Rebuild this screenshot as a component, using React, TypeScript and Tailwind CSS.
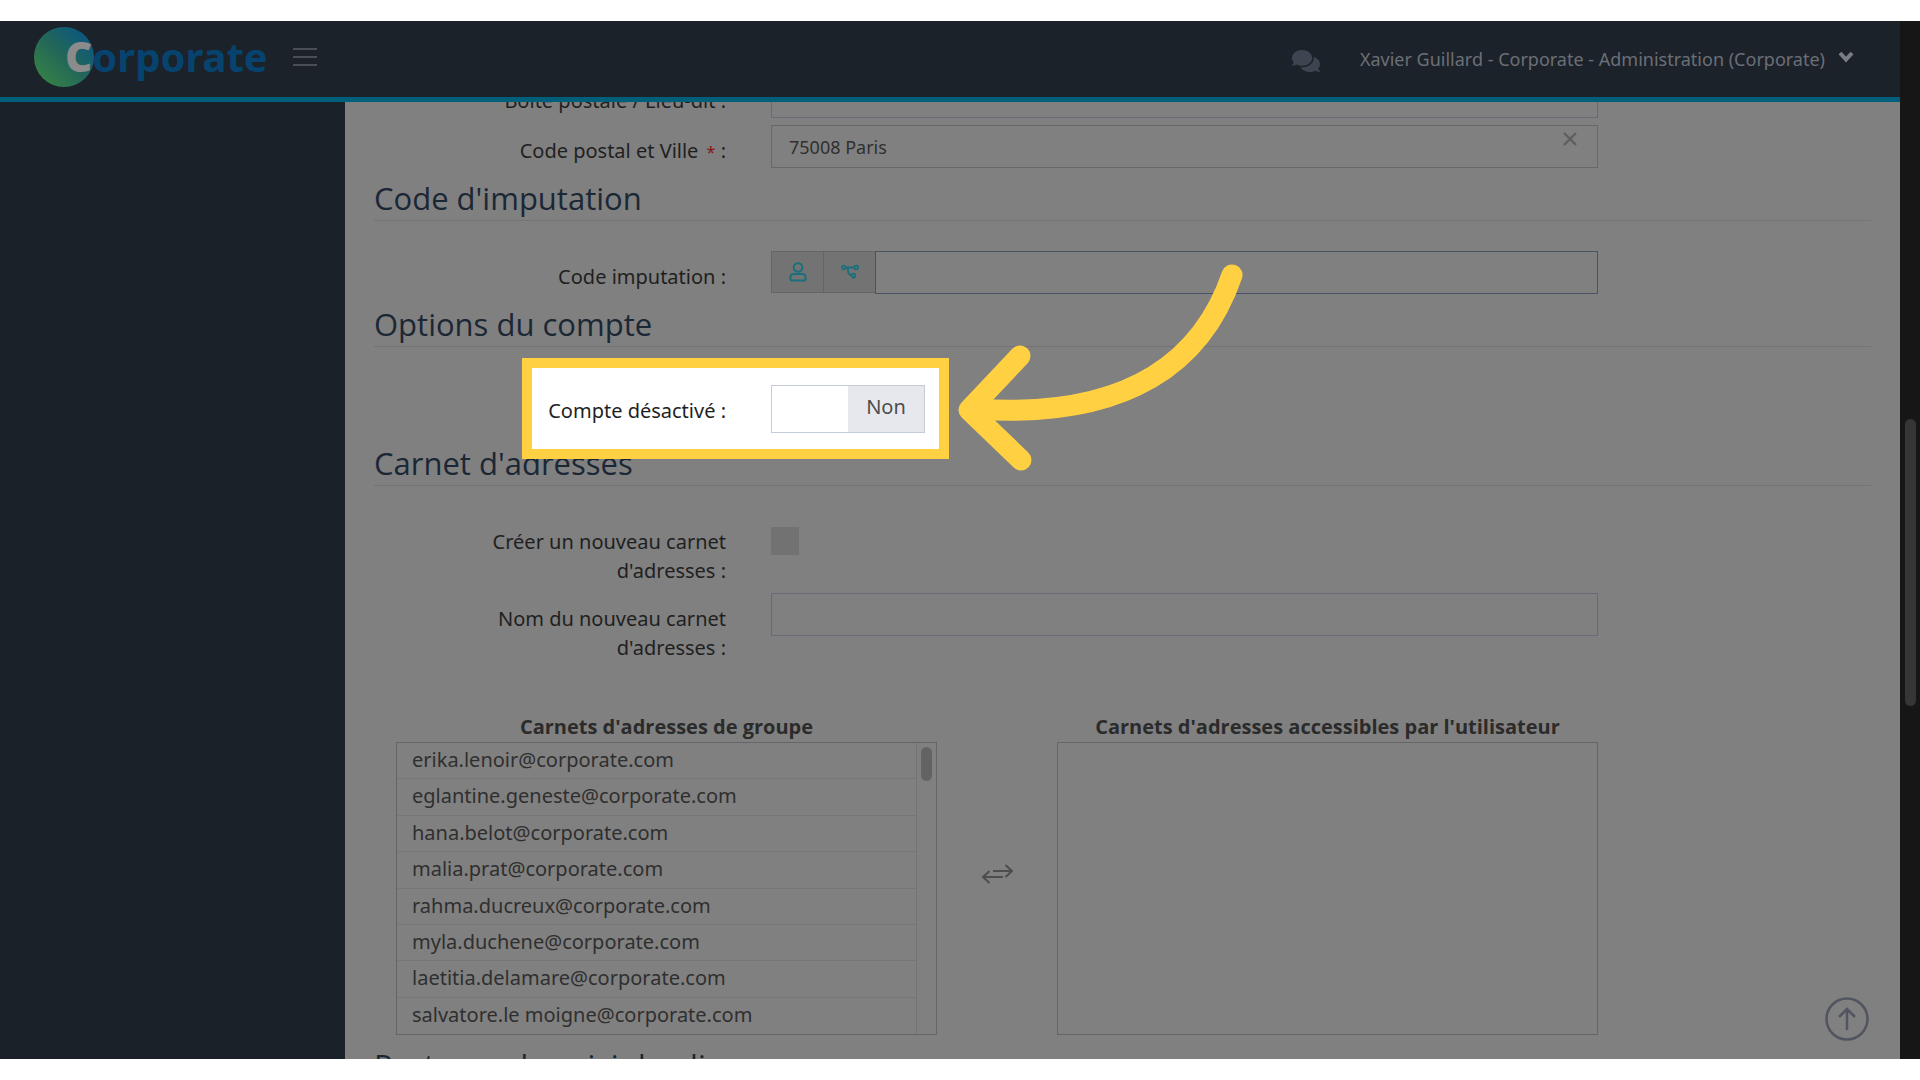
import type { ReactNode } from 'react';
import { FaComments } from 'react-icons/fa';

const GROUP_BOOKS = [
  'erika.lenoir@corporate.com',
  'eglantine.geneste@corporate.com',
  'hana.belot@corporate.com',
  'malia.prat@corporate.com',
  'rahma.ducreux@corporate.com',
  'myla.duchene@corporate.com',
  'laetitia.delamare@corporate.com',
  'salvatore.le moigne@corporate.com',
];

const inputClass =
  'block h-[43px] w-full min-w-0 border bg-transparent px-[17px] text-[18px] text-[#303030] outline-none';

function Logo() {
  return (
    <a href="#" className="relative flex h-[60px] items-center pl-[31px]" aria-label="Corporate">
      <span className="absolute left-0 top-0 size-[60px] rounded-full bg-linear-to-tr from-[#3b8a3c] via-[#236658] to-[#07508a]" />
      <span className="relative flex items-baseline leading-[58px]">
        <span className="text-[42px] font-black text-[#8b8b8b]">C</span>
        <span className="text-[40px] font-bold text-[#07436f]">orporate</span>
      </span>
    </a>
  );
}

function Header() {
  return (
    <header className="flex h-[81px] shrink-0 items-center border-b-5 border-[#00607c] bg-[#1c222a] pb-[5px] pl-[34px] pr-[46px]">
      <Logo />
      <button className="ml-[25px] flex w-6 flex-col gap-[6px]" aria-label="Menu">
        <span className="h-[2px] w-full bg-[#484d56]" />
        <span className="h-[2px] w-full bg-[#484d56]" />
        <span className="h-[2px] w-full bg-[#484d56]" />
      </button>

      <div className="ml-auto flex items-center pt-[5px]">
        <button className="mr-10 pt-1 text-[#3e4550]" aria-label="Messages">
          <FaComments size={28} />
        </button>
        <button className="flex items-center gap-[13px] text-[18px] leading-6 text-[#6b6f76]">
          Xavier Guillard - Corporate - Administration (Corporate)
          <svg width="16" height="12" viewBox="0 0 16 12" fill="none" stroke="#7a7d83" strokeWidth="4" className="mb-1">
            <path d="m2 2 6 6.500L14 2" />
          </svg>
        </button>
      </div>
    </header>
  );
}

function SectionTitle({ children }: { children: ReactNode }) {
  return (
    <h2 className="border-b border-[#747474] pt-2 font-['Open_Sans',sans-serif] text-[31px] leading-[44px] text-[#1b2735]">
      {children}
    </h2>
  );
}

interface FieldProps {
  label: ReactNode;
  id: string;
  className?: string;
  children: ReactNode;
}

function Field({ label, id, className = '', children }: FieldProps) {
  return (
    <div className={`mr-[273px] grid grid-cols-[352px_1fr] gap-x-[45px] ${className}`}>
      <label htmlFor={id} className="relative z-20 -mb-3 pl-[90px] pt-[11px] text-right text-[20px] leading-[29px] text-[#1f1f1f]">
        {label}
      </label>
      {children}
    </div>
  );
}

function UserIcon() {
  return (
    <svg width="18" height="20" viewBox="0 0 18 20" fill="none" stroke="currentColor" strokeWidth="2">
      <circle cx="9" cy="5.5" r="4.3" />
      <path d="M4.500 12h9c2 0 3.200 2 3.200 4.500 0 1.200-.7 2-2 2H3.300c-1.300 0-2-.8-2-2C1.300 14 2.500 12 4.500 12Z" />
    </svg>
  );
}

function BranchIcon() {
  return (
    <svg width="18" height="16" viewBox="0 0 18 16" fill="none" stroke="currentColor" strokeWidth="1.800">
      <circle cx="2.800" cy="3.500" r="1.900" />
      <circle cx="15.200" cy="3.500" r="1.900" />
      <circle cx="12.500" cy="11.500" r="1.900" />
      <path d="M4.700 3.500h8.600M7 3.500v3.200c0 2.600 1.500 4 3.600 4.500M12.500 13.400v1.600" />
    </svg>
  );
}

// Yellow frame and arrow that point at the current step
function Spotlight() {
  return (
    <div className="absolute -bottom-4 -top-[17px] left-[158px] z-10 w-[407px] bg-white ring-[10px] ring-[#ffd142]">
      <svg
        className="pointer-events-none absolute -top-[108px] left-full"
        width="320"
        height="220"
        viewBox="0 0 320 220"
        fill="none"
        stroke="#ffd142"
        strokeWidth="21"
        strokeLinecap="round"
        strokeLinejoin="round"
      >
        <path d="M293 15C264 100 191 160 36 149" />
        <path d="M81 96 30 150l52 50" />
      </svg>
    </div>
  );
}

function Scroller({ title, children }: { title: string; children?: ReactNode }) {
  return (
    <div>
      <h3 className="text-center font-['Open_Sans',sans-serif] text-[20px] font-bold leading-[30px] text-[#2b2b2b]">
        {title}
      </h3>
      <div className="flex h-[293px] border border-[#656565]">{children}</div>
    </div>
  );
}

function AccountForm() {
  return (
    <form className="min-w-0 flex-1 overflow-hidden bg-[#808080] px-[29px]">
      <Field label="Boîte postale / Lieu-dit :" id="bp" className="-mt-[27px]">
        <input id="bp" className={`${inputClass} border-[#676b75]`} />
      </Field>

      <Field
        label={<>Code postal et Ville <span className="ml-[3px] text-[16px] text-[#8a1414]">*</span> :</>}
        id="city"
        className="mt-[7px]"
      >
        <div className="relative">
          <input id="city" defaultValue="75008 Paris" className={`${inputClass} border-[#686868]`} />
          <button type="button" className="absolute right-[21px] top-[7px] text-[#5e5e5e]" aria-label="Effacer">
            <svg width="14" height="14" viewBox="0 0 14 14" stroke="currentColor" strokeWidth="2.400">
              <path d="m1 1 12 12M13 1 1 13" />
            </svg>
          </button>
        </div>
      </Field>

      <SectionTitle>Code d'imputation</SectionTitle>
      <Field label="Code imputation :" id="code" className="mt-[30px]">
        <div className="flex">
          <div className="flex h-[42px] shrink-0 divide-x divide-[#656565] border border-r-0 border-[#656565] bg-[#737373] text-[#19707c]">
            <button type="button" className="flex w-[52px] items-center justify-center" aria-label="Utilisateur">
              <UserIcon />
            </button>
            <button type="button" className="flex w-[51px] items-center justify-center" aria-label="Groupe">
              <BranchIcon />
            </button>
          </div>
          <input id="code" className={`${inputClass} border-[#4a5268]`} />
        </div>
      </Field>

      <SectionTitle>Options du compte</SectionTitle>
      <div className="relative mt-[38px]">
        <Spotlight />
        <Field label="Compte désactivé :" id="disabled">
          <label className="relative z-20 flex h-[48px] w-[154px] border border-[#c3cbdc] bg-white">
            <input id="disabled" type="checkbox" className="peer sr-only" />
            <span className="ml-auto flex w-[76px] items-center justify-center bg-[#e7e8ee] pb-1 text-[20px] text-[#4d4d4d]">
              Non
            </span>
          </label>
        </Field>
      </div>

      <SectionTitle>Carnet d'adresses</SectionTitle>
      <Field label="Créer un nouveau carnet d'adresses :" id="create" className="mt-[30px] h-[68px]">
        <input id="create" type="checkbox" className="mt-[11px] size-7 appearance-none bg-[#727272]" />
      </Field>
      <Field label="Nom du nouveau carnet d'adresses :" id="name" className="mt-[9px] h-[68px]">
        <input id="name" className={`${inputClass} border-[#676b75]`} />
      </Field>

      <div className="ml-[22px] mr-[273px] mt-[51px] grid grid-cols-[1fr_120px_1fr]">
        <Scroller title="Carnets d'adresses de groupe">
          <ul className="grid flex-1 auto-rows-fr divide-y divide-[#777777] border-r border-[#747474] text-[20px] leading-[34px] text-[#2f2f2f]">
            {GROUP_BOOKS.map((mail) => (
              <li key={mail} className="pl-[15px]">{mail}</li>
            ))}
          </ul>
          <div className="w-[19px] px-1 pt-[4px]">
            <div className="h-[34px] rounded-full bg-[#636363]" />
          </div>
        </Scroller>
        <button type="button" className="mt-[30px] self-center justify-self-center pb-[29px] text-[#4d4d4d]" aria-label="Échanger">
          <svg width="32" height="20" viewBox="0 0 32 20" fill="none" stroke="currentColor" strokeWidth="2">
            <path d="M12 7h19M24.500 1l6.500 6-6.500 6M22 13H2M8.500 7 2 13l6.500 6" />
          </svg>
        </button>
        <Scroller title="Carnets d'adresses accessibles par l'utilisateur" />
      </div>

      <SectionTitle>Portages de suivi de plis</SectionTitle>
    </form>
  );
}

export default function App() {
  return (
    <div className="flex h-screen bg-white py-[21px] font-['Noto_Sans',sans-serif]">
      <div className="relative flex min-w-0 flex-1 flex-col">
        <Header />
        <div className="flex min-h-0 flex-1">
          <aside className="w-[345px] shrink-0 bg-[#1b2129]" />
          <AccountForm />
        </div>
        <button className="absolute bottom-[18px] right-[31px] text-[#50555f]" aria-label="Haut de page">
          <svg width="44" height="44" viewBox="0 0 44 44" fill="none" stroke="currentColor" strokeWidth="2.500">
            <circle cx="22" cy="22" r="20.500" />
            <path d="M22 33V12M14 20l8-8 8 8" />
          </svg>
        </button>
      </div>

      <div className="w-5 shrink-0 bg-[#161616] px-[5px] pt-[398px]">
        <div className="h-[287px] w-[11px] rounded-full bg-[#363636]" />
      </div>
    </div>
  );
}
